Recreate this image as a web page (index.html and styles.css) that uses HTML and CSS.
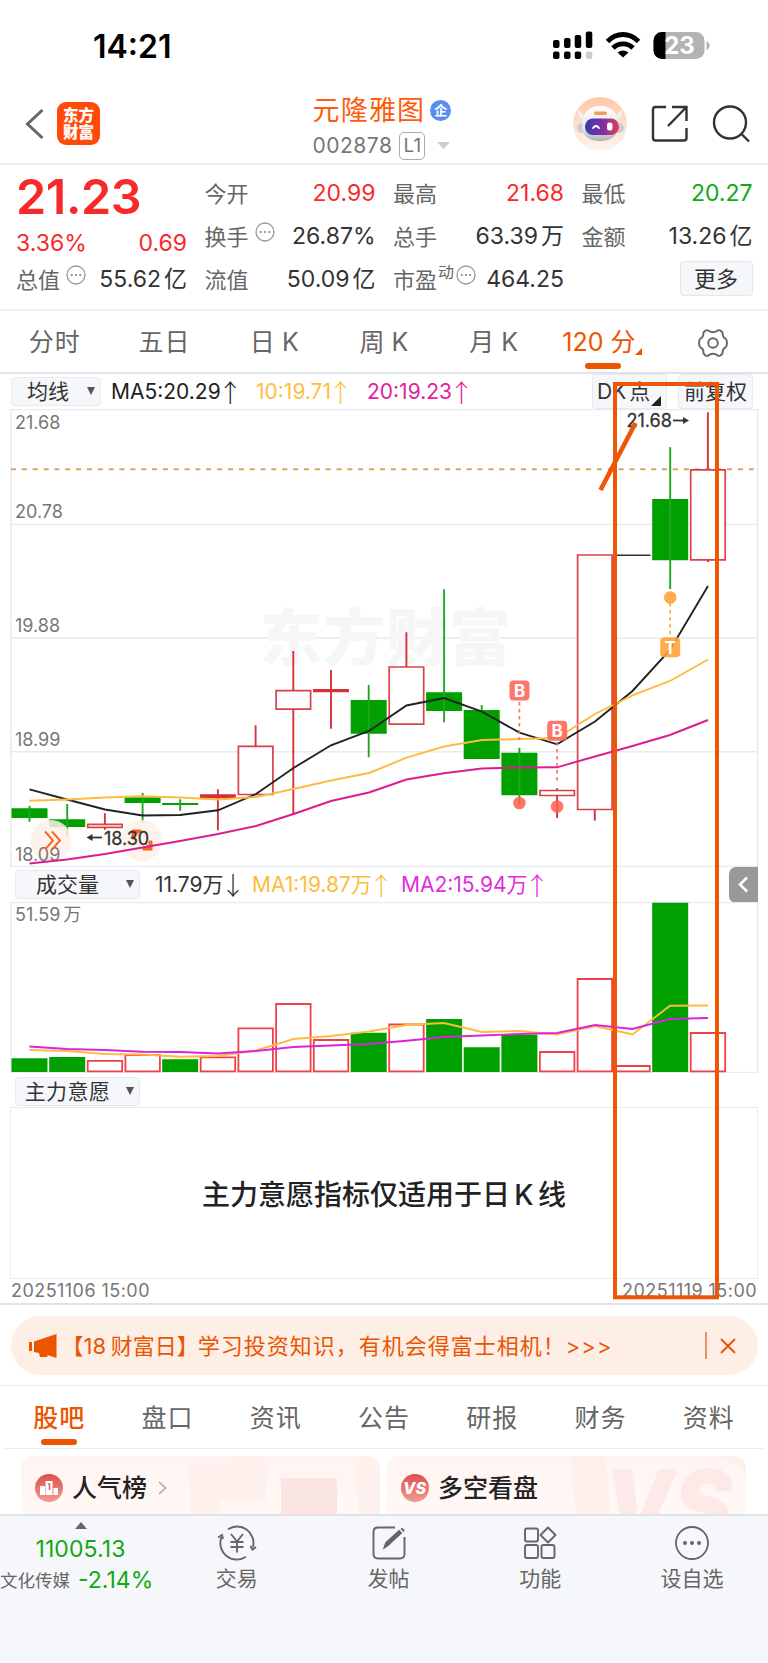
FILE: index.html
```html
<!DOCTYPE html>
<html lang="zh-CN">
<head>
<meta charset="utf-8">
<title>元隆雅图 002878</title>
<link rel="stylesheet" href="styles.css">
</head>
<body>
<div class="screen">
  <div class="status">
    <span class="clock">14:21</span>
    <svg class="status-icons" width="160" height="32" viewBox="0 0 160 32">
      <g fill="#000"><rect x="0" y="10" width="6.500" height="8" rx="2"/><rect x="11" y="8" width="6.500" height="10" rx="2"/><rect x="21.700" y="5" width="6.500" height="13" rx="2"/><rect x="32.800" y="1.500" width="6.500" height="16.500" rx="2"/><rect x="0" y="21.500" width="6.500" height="7.500" rx="2"/><rect x="11" y="21.500" width="6.500" height="7.500" rx="2"/><rect x="21.700" y="21.500" width="6.500" height="7.500" rx="2"/></g>
      <rect x="32.800" y="21.500" width="6.500" height="7.500" rx="2" fill="#ccc"/>
      <g fill="none" stroke="#000" stroke-width="4.800"><path d="M54.500 11.500Q61 4.500 70 4.500T85.500 11.500"/><path d="M60 18Q64 13.800 70 13.800T80 18"/></g>
      <path d="M64.500 22.500Q70 18.500 75.500 22.500L70 27.500z"/>
      <rect x="100.500" y="2" width="51" height="27" rx="8.500" fill="#b3b3b3"/>
      <path d="M112.500 2h-3.500a8.500 8.500 0 0 0-8.500 8.500v10a8.500 8.500 0 0 0 8.500 8.500h3.500z"/>
      <path d="M153.500 11q3 1.500 3 4.500t-3 4.500z" fill="#b3b3b3"/>
      <text class="battery" x="126.500" y="24" text-anchor="middle">23</text>
    </svg>
  </div>

  <header class="header">
    <div class="header-left">
      <svg width="20" height="32" viewBox="0 0 20 32"><path d="M17.500 2L2.500 16l15 14" fill="none" stroke="#666" stroke-width="3"/></svg>
      <div class="logo"><span>东方</span><span>财富</span></div>
    </div>
    <div class="title">
      <div class="name">元隆雅图<i class="corp">企</i></div>
      <div class="code">002878<i class="level">L1</i><svg width="13" height="7" viewBox="0 0 13 7"><path d="M0 0h13L6.500 7z" fill="#ccc"/></svg></div>
    </div>
    <div class="header-right">
      <svg class="robot" width="54" height="54" viewBox="0 0 54 54">
        <defs>
          <linearGradient id="halo" x1="0" y1="0" x2="0" y2="1"><stop offset="0" stop-color="#ffc7a8"/><stop offset="1" stop-color="#fff6f1"/></linearGradient>
          <linearGradient id="visor"><stop offset="0" stop-color="#3a3aa8"/><stop offset=".5" stop-color="#7a2fa8"/><stop offset="1" stop-color="#e0405c"/></linearGradient>
          <linearGradient id="head" x1="0" y1="0" x2="0" y2="1"><stop offset="0" stop-color="#fff"/><stop offset=".65" stop-color="#e8e5e8"/><stop offset="1" stop-color="#aeb0b8"/></linearGradient>
        </defs>
        <circle cx="27" cy="27" r="27" fill="url(#halo)"/>
        <path d="M10 18L5 12q-1 8 5 11zM44 18l5-6q1 8-5 11z" fill="#f3f0f2"/>
        <circle cx="9" cy="31" r="5" fill="#cfcbd0"/><circle cx="46" cy="31" r="5" fill="#cfcbd0"/>
        <path d="M27 9c11 0 18 7 19 17 0 12-7 18-19 18S8 38 9 26C10 16 16 9 27 9z" fill="url(#head)"/>
        <rect x="21" y="14.500" width="13" height="3.500" rx="1.700" fill="#f39b5e"/>
        <rect x="12" y="21.500" width="34" height="16.500" rx="8" fill="url(#visor)"/>
        <path d="M20 31q3-4 6 0" fill="none" stroke="#fff" stroke-width="1.800" stroke-linecap="round"/>
        <rect x="34" y="25.500" width="5.500" height="8" rx="2.500" fill="#fff"/>
      </svg>
      <svg width="38" height="38" viewBox="0 0 38 38" fill="none" stroke="#333" stroke-width="2.400"><path d="M15 2H4.500Q2 2 2 4.500V33q0 2.500 2.500 2.500H33q2.500 0 2.500-2.500V23M35.500 16V2H21M35 2.500L17 21"/></svg>
      <svg width="38" height="38" viewBox="0 0 38 38" fill="none" stroke="#333" stroke-width="2.400"><circle cx="18" cy="17.500" r="16"/><path d="M29 28.500l8 8"/></svg>
    </div>
  </header>

  <section class="quote">
    <div class="qcol">
      <div class="price">21.23</div>
      <div class="cell change"><b class="up">3.36%</b><b class="up">0.69</b></div>
      <div class="cell"><span>总值<svg class="info" viewBox="0 0 20 20"><use href="#dots"/></svg></span><b>55.62 亿</b></div>
    </div>
    <div class="qcol">
      <div class="cell"><span>今开</span><b class="up">20.99</b></div>
      <div class="cell"><span>换手<svg class="info" viewBox="0 0 20 20"><use href="#dots"/></svg></span><b>26.87%</b></div>
      <div class="cell"><span>流值</span><b>50.09 亿</b></div>
    </div>
    <div class="qcol">
      <div class="cell"><span>最高</span><b class="up">21.68</b></div>
      <div class="cell"><span>总手</span><b>63.39 万</b></div>
      <div class="cell"><span>市盈<sup>动</sup><svg class="info tight" viewBox="0 0 20 20"><use href="#dots"/></svg></span><b>464.25</b></div>
    </div>
    <div class="qcol">
      <div class="cell"><span>最低</span><b class="down">20.27</b></div>
      <div class="cell"><span>金额</span><b>13.26 亿</b></div>
      <div class="cell end"><button class="more">更多</button></div>
    </div>
    <svg class="defs" width="0" height="0"><symbol id="dots" viewBox="0 0 20 20"><circle cx="10" cy="10" r="9" fill="none" stroke="#999" stroke-width="1.300"/><g fill="#888"><circle cx="5.800" cy="10" r="1.100"/><circle cx="10" cy="10" r="1.100"/><circle cx="14.200" cy="10" r="1.100"/></g></symbol></svg>
  </section>

  <nav class="periods">
    <span class="cn">分时</span><span class="cn">五日</span><span>日 K</span><span>周 K</span><span>月 K</span>
    <span class="active">120 分<svg class="corner" width="7" height="7" viewBox="0 0 7 7"><path d="M7 0v7H0z" fill="#ec5500"/></svg></span>
    <span><svg width="30" height="28" viewBox="-15 -14 30 28" fill="none" stroke="#666" stroke-width="1.900" stroke-linejoin="round"><path d="M-7.500-12.500Q-5.500-13.500-4-12Q0-9.500 4-12Q5.500-13.500 7.500-12.500L9.500-10.500Q9.500-5.500 12.500-4.500Q14-3.500 14 0Q14 3.500 12.500 4.500Q9.500 5.500 9.500 10.500L7.500 12.500Q5.500 13.500 4 12Q0 9.500-4 12Q-5.500 13.500-7.500 12.500L-9.500 10.500Q-9.500 5.500-12.500 4.500Q-14 3.500-14 0Q-14-3.500-12.500-4.500Q-9.500-5.500-9.500-10.500Z"/><circle r="4.800"/></svg></span>
  </nav>

  <div class="legend ma">
    <div class="select short">均线<i></i></div>
    <span class="l1">MA5:20.29<em>↑</em></span><span class="l2">10:19.71<em>↑</em></span><span class="l3">20:19.23<em>↑</em></span>
    <div class="chips"><div class="chip">DK 点<svg width="10" height="10" viewBox="0 0 10 10"><path d="M10 0v10H0z" fill="#222"/></svg></div><div class="chip fq">前复权</div></div>
  </div>

  <svg class="panel" width="768" height="458" viewBox="0 409 768 458">
    <path class="grid" d="M11 409.500H757.500V867M11 409.500V867M11 524.500H757.500M11 638H757.500M11 751.700H757.500M11 866.500H757.500"/>
    <text class="watermark" x="260" y="661" textLength="251">东方财富</text>
    <g class="axis"><text x="15" y="428.500">21.68</text><text x="15" y="517.500">20.78</text><text x="15" y="632">19.88</text><text x="15" y="746">18.99</text></g>
    <path d="M11 469.300H757" stroke="#dba265" stroke-width="1.900" stroke-dasharray="5 5.850"/>
    <path class="green" d="M11.500 808.300h36v9.700h-36zM49.200 819.300h36v7.700h-36zM124.600 797.300h36v5.700h-36zM162.200 803h36v2h-36zM350.700 700h36v33.700h-36zM426.100 692.300h36v18.700h-36zM463.700 710h36v49h-36zM501.400 752.700h36v42.600h-36zM652.200 499h36v61.300h-36z"/>
    <path class="gwick" d="M29.500 805.700V821.700M67.200 804V837M142.600 793V822.700M180.200 799.300V810.700M368.700 685V757.300M444.100 589.300V722.300M481.700 705V711M519.400 747.700V804M670.200 447.300V589"/>
    <path class="red" d="M199.900 794.300h36v4h-36zM313 689h36v3.300h-36z"/>
    <path class="rbox" d="M87.700 824.300h34.500v3h-34.500zM238.400 746.300h34.500v48.200h-34.500zM276.100 690.700h34.500v18.500h-34.500zM389.200 667h34.500v57.200h-34.500zM539.900 790.500h34.500v5h-34.500zM577.600 555h34.500v254.500h-34.500zM690.700 469.800h34.500v90h-34.500z"/>
    <path class="rwick" d="M104.900 813.300V824M104.900 827.500V829.700M217.900 789.300V830.300M255.600 725.300V746M293.300 651V690.500M293.300 709.500V815M331 670V728.700M406.400 632.300V667M557.100 788.300V790.500M557.100 795.500V818M594.800 809.700V820.700M707.900 412.300V469.500M707.900 560V562"/>
    <path d="M614.500 555.300h36" stroke="#333" stroke-width="1.600"/>
    <g fill="#fff0e9"><circle cx="51" cy="840.500" r="20.500" opacity=".85"/><circle cx="142" cy="840.500" r="20.500" opacity=".85"/></g>
    <text class="axis" x="15" y="860.500">18.09</text>
    <g fill="none" stroke="#f2681f" stroke-width="1.900"><path d="M45 831.500l8 9-8 9M52 831.500l8 9-8 9"/></g>
    <path d="M132 830h9v3h-6v6h-3zM152 850h-9v-3h6v-6h3zM134 831l6 6M151 849l-6-6" fill="#f2681f" stroke="#f2681f"/>
    <g class="call"><text x="104" y="845">18.30</text><path d="M89 837.500h13"/><path class="tip" d="M86.500 837.500l6-3.500v7z"/><text x="626.500" y="427">21.68</text><path d="M673 420.500h13"/><path class="tip" d="M689 420.500l-6-3.500v7z"/></g>
    <polyline class="c1" points="29.500,789.300 67,799.500 105,809.500 142.500,815.500 180,815 218,810.300 256,794 293.500,768 331,745.300 369,731 406.500,705.500 444,698 482,711.700 519.500,732.700 557,744.300 595,721.500 632.500,691 670,650 708,586"/>
    <polyline class="c2" points="29.500,800.700 67,799.500 105,797.500 142.500,796.300 180,797.500 218,799.500 256,797 293.500,789 331,780.500 369,773 406.500,757.700 444,746.500 482,740 519.500,739 557,738 595,714 632.500,695.300 670,681 708,659.500"/>
    <polyline class="c3" points="29.500,863.500 67,859.500 105,854 142.500,847.500 180,841 218,834 256,826 293.500,814 331,801 369,792.500 406.500,779.500 444,773.300 482,768.500 519.500,767.500 557,767.300 595,756.500 632.500,746 670,735 708,720"/>
    <g stroke="#fb7468" stroke-width="1.700" stroke-dasharray="3.500 3.500"><path d="M519.400 702v38"/><path d="M557.100 742v39"/></g>
    <g fill="#ff6052" opacity=".85"><circle cx="519.400" cy="803" r="6.300"/><circle cx="557.100" cy="806.500" r="6.300"/><rect x="509.500" y="680.500" width="20" height="20" rx="4"/><rect x="547.200" y="720.700" width="20" height="20" rx="4"/></g>
    <path d="M670.200 603v33" stroke="#ffa63c" stroke-width="1.700" stroke-dasharray="3.500 3.500"/>
    <g fill="#ffa43a" opacity=".9"><circle cx="670.200" cy="597.500" r="6.300"/><rect x="660.200" y="637.300" width="20" height="20" rx="4"/></g>
    <g class="mark"><text x="519.500" y="697">B</text><text x="557.200" y="737.200">B</text><text x="670.200" y="653.500">T</text></g>
  </svg>

  <div class="legend vol">
    <div class="select three">成交量<i></i></div>
    <span class="v0">11.79万<em>↓</em></span><span class="v1">MA1:19.87万<em>↑</em></span><span class="v2">MA2:15.94万<em>↑</em></span>
    <div class="drawer"><svg width="11" height="17" viewBox="0 0 11 17"><path d="M9 1.500L2 8.500l7 7" fill="none" stroke="#fff" stroke-width="2.600"/></svg></div>
  </div>

  <svg class="panel" width="768" height="171" viewBox="0 902 768 171">
    <path class="grid" d="M11 902.500H757.500V1072.500H11z"/>
    <text class="axis" x="15" y="920.500">51.59 万</text>
    <path class="green" d="M11.500 1072v-13.700h36v13.700zM49.200 1072v-15h36v15zM162.200 1072v-12.700h36v12.700zM350.700 1072v-39.300h36v39.300zM426.100 1072v-53h36v53zM463.700 1072v-24.700h36v24.700zM501.400 1072v-37.300h36v37.300zM652.200 1072v-169.300h36v169.300z"/>
    <path class="vbox" d="M87.700 1071.300v-10.500h34.500v10.500zM125.400 1071.300v-16.300h34.500v16.300zM200.700 1071.300v-14h34.500v14zM238.400 1071.300v-43h34.500v43zM276.100 1071.300v-67.300h34.500v67.300zM313.800 1071.300v-31.300h34.500v31.300zM389.200 1071.300v-46.800h34.500v46.800zM539.900 1071.300v-19.300h34.500v19.300zM577.600 1071.300v-92.300h34.500v92.300zM615.300 1071.300v-5.300h34.500v5.300zM690.700 1071.300v-38.300h34.500v38.300z"/>
    <polyline class="c2" points="29.500,1050 67,1051 105,1054 142.500,1054.500 180,1056.700 218,1056 256,1050.500 293.500,1039 331,1036 369,1031.500 406.500,1025 444,1023 482,1032 519.500,1031 557,1034.500 595,1026 632.500,1034.500 670,1005.700 708,1005.500"/>
    <polyline class="c4" points="29.500,1046.500 67,1049 105,1050 142.500,1051.700 180,1052 218,1053.500 256,1051 293.500,1047 331,1045.500 369,1044 406.500,1040.700 444,1037 482,1035.500 519.500,1034 557,1033 595,1025 632.500,1029 670,1019 708,1018"/>
  </svg>

  <div class="legend will"><div class="select four">主力意愿<i></i></div></div>
  <div class="notice">主力意愿指标仅适用于日 K 线</div>
  <div class="dates"><span>20251106 15:00</span><span>20251119 15:00</span></div>

  <div class="banner-row">
    <div class="banner">
      <svg width="28" height="24" viewBox="0 0 28 24"><path d="M0 8h3v9H0zM5 7.500L27.500 0v24l-9-3v2H11l-1-4-5-1z" fill="#ec5500"/></svg>
      <span class="b1">【18 财富日】</span><span class="b2">学习投资知识，有机会得富士相机！</span><span class="b3">&gt;&gt;&gt;</span>
      <i class="rule"></i>
      <svg width="16" height="16" viewBox="0 0 16 16"><path d="M1 1l14 14M15 1L1 15" stroke="#ec5500" stroke-width="1.900"/></svg>
    </div>
  </div>

  <nav class="sections"><span class="active">股吧</span><span>盘口</span><span>资讯</span><span>公告</span><span>研报</span><span>财务</span><span>资料</span></nav>

  <div class="cards">
    <div class="card rank">
      <svg width="28" height="28" viewBox="0 0 28 28"><defs><linearGradient id="badge" x1="0" y1="0" x2="0" y2="1"><stop offset="0" stop-color="#dd4f4d"/><stop offset="1" stop-color="#f09b93"/></linearGradient></defs><circle cx="14" cy="14" r="14" fill="url(#badge)"/><path d="M5 12h5v9H5zM10.500 7h7v14h-7zM18.500 14H23v7h-4.500z" fill="#fff"/><path d="M13 10h1.500v6" fill="none" stroke="#dd6060" stroke-width="1.500"/></svg>
      <span>人气榜</span>
      <svg class="chev" width="9" height="14" viewBox="0 0 9 14"><path d="M1 1l6.500 6L1 13" fill="none" stroke="#aaa" stroke-width="1.600"/></svg>
      <svg class="deco" width="190" height="58" viewBox="0 0 190 58"><path d="M0 5h36V0h40v45H30v13H0z" fill="#fff1ee"/><path d="M91 22h56v36H91z" fill="#fae5e3"/><path d="M163 0h16q11 0 11 12v46h-21z" fill="#fff1ee"/></svg>
    </div>
    <div class="card versus">
      <svg width="28" height="28" viewBox="0 0 28 28"><circle cx="14" cy="14" r="14" fill="url(#badge)"/><text class="vs" x="13.500" y="20" text-anchor="middle">VS</text></svg>
      <span>多空看盘</span>
      <svg class="deco" width="176" height="58" viewBox="0 0 176 58"><path d="M0 0h35l6 58H6zM80 0h60q32 5 36 22V0z" fill="#fff0ee"/><text class="bigvs" x="34" y="84" textLength="128" lengthAdjust="spacingAndGlyphs">VS</text></svg>
    </div>
  </div>

  <footer class="toolbar">
    <div class="index">
      <svg width="12" height="7" viewBox="0 0 12 7"><path d="M6 0l6 7H0z" fill="#666"/></svg>
      <b>11005.13</b>
      <div><span>文化传媒</span><b>-2.14%</b></div>
    </div>
    <div class="tool"><svg width="40" height="36" viewBox="0 0 40 36" fill="none" stroke="#666" stroke-width="1.900"><path d="M11 4.200A16.500 16.500 0 0 1 36 22M29 31.800A16.500 16.500 0 0 1 4.500 12M1 12.500L5 10l1 4M39 22l-3.500 2.500-2-3.500"/><path d="M14 9l6 7.500L26 9M20 16.500V27.500M13.500 17h13M13.500 22h13"/></svg><span>交易</span></div>
    <div class="tool"><svg width="36" height="36" viewBox="0 0 36 36" fill="none" stroke="#666" stroke-width="1.900"><path d="M24 2.500H7Q2.500 2.500 2.500 7v22q0 4.500 4.500 4.500h22q4.500 0 4.500-4.500V12"/><path d="M13.500 22.500L15 18 28 6l2 2L16.500 20.500z" fill="#666"/><path d="M31 5.500l1.500-1.500" stroke-width="4"/></svg><span>发帖</span></div>
    <div class="tool"><svg width="36" height="36" viewBox="0 0 36 36" fill="none" stroke="#666" stroke-width="1.900"><rect x="3" y="3.500" width="13" height="13" rx="2"/><rect x="3" y="20" width="13" height="13" rx="2"/><rect x="19.500" y="20" width="13" height="13" rx="2"/><path d="M26 2.500l7.500 7.500-7.500 7.500-7.500-7.500z" stroke-linejoin="round"/></svg><span>功能</span></div>
    <div class="tool"><svg width="36" height="36" viewBox="0 0 36 36"><circle cx="18" cy="18" r="16" fill="none" stroke="#666" stroke-width="1.800"/><g fill="#666"><circle cx="11" cy="18" r="2"/><circle cx="18" cy="18" r="2"/><circle cx="25" cy="18" r="2"/></g></svg><span>设自选</span></div>
  </footer>

  <svg class="drawing" width="768" height="1663" viewBox="0 0 768 1663" fill="none" stroke="#ee5604"><rect x="615" y="384" width="102" height="913.300" stroke-width="4"/><path d="M600.500 490L635.500 423" stroke-width="4.600"/></svg>
</div>
</body>
</html>
```
FILE: styles.css
```css
* { box-sizing: border-box; }
body { margin: 0; background: #fff; }
i, em { font-style: normal; }
svg { display: block; flex: none; }
.screen {
  position: relative; width: 768px; height: 1663px; overflow: hidden;
  font-family: Inter, "Noto Sans CJK SC", sans-serif; color: #333; line-height: 1; white-space: nowrap;
}
.status { height: 84px; display: flex; justify-content: space-between; padding: 30px 55px 0 93px; }
.clock { font-size: 32px; font-weight: 600; color: #000; line-height: 33px; }
.battery { font-size: 24px; font-weight: 700; fill: #fff; }

.header { height: 81px; border-bottom: 2px solid #ececee; display: grid; grid-template-columns: 1fr auto 1fr; align-items: center; padding: 0 18px 0 25px; }
.header-left, .header-right { display: flex; align-items: center; }
.header-left { gap: 12px; }
.logo { width: 43px; height: 43px; border-radius: 9px; background: #ff4a0a; color: #fff; display: flex; flex-direction: column; align-items: center; justify-content: center; font-size: 15.500px; font-weight: 900; line-height: 17px; }
.title { width: 150px; display: flex; flex-direction: column; gap: 4px; padding-top: 6px; }
.name { color: #ff5a0c; font-size: 27px; line-height: 34px; letter-spacing: 1.200px; display: flex; align-items: center; gap: 5px; }
.corp { width: 21px; height: 21px; border-radius: 50%; background: #5c8cf0; color: #fff; font-size: 13px; font-weight: 700; letter-spacing: 0; line-height: 20px; text-align: center; }
.code { display: flex; align-items: center; font-size: 21px; letter-spacing: .5px; color: #777; height: 28px; }
.level { width: 26px; height: 28px; border: 1.500px solid #aaa; border-radius: 5px; margin: 0 12px 0 7px; font-size: 19px; line-height: 26px; letter-spacing: 0; text-align: center; }
.header-right { justify-content: flex-end; gap: 23px; }
.header-right .robot { margin-right: 1px; }

.quote { height: 146px; padding: 7px 16px 0 16px; border-bottom: 2px solid #f0f0f2; display: grid; grid-template-columns: repeat(4, 171px); column-gap: 17.500px; }
.defs { position: absolute; }
.cell { height: 43px; display: flex; justify-content: space-between; align-items: center; font-size: 22px; }
.cell span { color: #666; display: flex; align-items: center; }
.cell b { font-weight: 400; font-size: 23px; word-spacing: -3.500px; }
.cell sup { font-size: 16px; align-self: flex-start; margin: -5px 0 0 1px; line-height: 16px; }
.info { width: 20px; height: 20px; margin: -9px 0 0 6px; }
.info.tight { margin-left: 2px; }
.cell .up, .price { color: #f72a2a; }
.cell .down { color: #12a812; }
.price { height: 50px; font-size: 48.500px; font-weight: 600; line-height: 50px; letter-spacing: -.4px; }
.cell.change { height: 36px; padding-top: 7px; }
.cell.end { justify-content: flex-end; }
.more { width: 73px; height: 35px; padding: 0; margin-top: -2px; border: 1.500px solid #e6e7ec; border-radius: 4px; background: #f6f7fa; color: #333; font: 22px/30px Inter, "Noto Sans CJK SC", sans-serif; }

.periods { height: 63px; border-bottom: 2px solid #e2e3e8; display: grid; grid-template-columns: repeat(7, 1fr); }
.periods span, .sections span { position: relative; display: flex; justify-content: center; align-items: center; padding-top: 2px; font-size: 25px; color: #666; }
.periods .cn, .sections span { letter-spacing: 1px; }
.periods .active { color: #ec5500; padding-right: 3px; }
.sections .active { color: #ec5500; font-weight: 500; }
.active::after { content: ""; position: absolute; bottom: 3px; left: 50%; width: 36px; height: 6px; margin-left: -18px; border-radius: 3px; background: #ec5500; }
.corner { margin: 18px 0 0 -1px; }

.legend { display: flex; align-items: center; font-size: 21px; }
.legend em { display: inline-block; font-family: "Noto Sans CJK SC", sans-serif; font-size: 25px; font-weight: 300; line-height: 21px; width: 14px; text-indent: -5px; margin-left: 2px; }
.ma { height: 35px; padding: 0 15px 0 11px; }
.select { width: 125px; height: 29px; padding-right: 20px; border: 1.500px solid #e8e9ee; border-radius: 4px; background: #f6f7fa; display: flex; align-items: center; justify-content: center; position: relative; }
.select i { position: absolute; right: 5px; top: 9px; border: 4px solid transparent; border-top: 8px solid #555; border-bottom: 0; }
.select.short { width: 90px; padding-right: 16px; }
.select.four { letter-spacing: .4px; }
.l1, .l2, .l3, .v0, .v1, .v2 { display: flex; align-items: center; }
.l1 { width: 145px; margin-left: 10px; color: #222; }
.l2 { width: 111px; color: #ffbe45; }
.l3 { color: #e6219b; }
.chips { display: flex; gap: 11px; margin-left: auto; }
.chip { width: 75px; height: 35px; padding-left: 4px; border: 1.500px solid #e8e9ee; border-radius: 4px; background: #f6f7fa; display: flex; align-items: center; gap: 1px; word-spacing: -3px; }
.chip svg { margin-top: 18px; }
.chip.fq { padding-left: 5px; }

.grid { fill: none; stroke: #e9eaf2; stroke-width: 1.500; }
.watermark { font-size: 62px; font-weight: 900; fill: #f6f6f7; }
.axis { font-size: 18px; fill: #777; word-spacing: -2px; }
.green { fill: #00a000; }
.gwick { stroke: #1fa81f; stroke-width: 1.900; }
.red { fill: #d53037; }
.rwick { stroke: #d5343c; stroke-width: 1.900; }
.rbox { fill: #fff; stroke: #d8434a; stroke-width: 1.700; }
.vbox { fill: #fff; stroke: #ee4248; stroke-width: 1.800; }
.c1, .c2, .c3, .c4 { fill: none; stroke-width: 1.900; }
.c1 { stroke: #222; }
.c2 { stroke: #fdbb41; }
.c3 { stroke: #dc1c90; }
.c4 { stroke: #dc23dc; }
.call { font-size: 18px; fill: #333; stroke: #333; stroke-width: .3; }
.call path { stroke-width: 1.800; }
.call .tip { stroke: none; }
.mark { font-size: 17px; font-weight: 700; fill: #fff; text-anchor: middle; }

.vol { height: 35px; padding-left: 15px; }
.v0 { width: 97px; margin-left: 15px; }
.v1 { width: 149px; color: #fdbb41; }
.v2 { color: #e02de0; }
.drawer { width: 29px; height: 36px; margin: 0 10px 0 auto; border-radius: 7px 0 0 7px; background: #999; display: flex; align-items: center; justify-content: center; }
.will { height: 34px; padding: 2px 0 0 15px; }
.notice { height: 172px; margin: 0 10px 0 10px; padding-top: 3px; border: 1.500px solid #e9eaf2; display: flex; align-items: center; justify-content: center; font-size: 28px; font-weight: 500; color: #222; word-spacing: -3px; }
.dates { height: 26px; padding: 0 11px; border-bottom: 2px solid #e2e3e8; display: flex; justify-content: space-between; align-items: center; font-size: 18px; color: #777; letter-spacing: .45px; }

.banner-row { height: 81px; padding: 11px 10.500px; border-bottom: 1.500px solid #ececee; }
.banner { height: 59px; border-radius: 30px; background: #fdeee6; color: #ec5500; display: flex; align-items: center; padding: 0 22px 0 18px; font-size: 22px; }
.b1 { margin-left: 5px; word-spacing: -1.500px; }
.b2 { margin-left: -1px; letter-spacing: 1px; }
.b3 { letter-spacing: 1px; }
.rule { width: 1.500px; height: 27px; margin: 0 13px 0 auto; background: #f09263; }

.sections { height: 63px; margin: 0 5px; border-bottom: 1.500px solid #ececee; display: grid; grid-template-columns: repeat(7, 1fr); }
.cards { height: 65px; padding: 7px 21px 0; display: grid; grid-template-columns: 359px 359px; gap: 7px; }
.card { position: relative; height: 58px; overflow: hidden; padding: 6px 0 0 14px; border-radius: 12px 12px 0 0; background: linear-gradient(#fff4f2, #fff9f6); display: flex; align-items: center; gap: 9px; font-size: 25px; font-weight: 500; color: #222; }
.card > * { position: relative; z-index: 1; }
.card .deco { position: absolute; right: 0; top: 0; z-index: 0; }
.chev { margin-left: 2px; }
.vs { font-size: 16px; font-weight: 800; font-style: italic; fill: #fff; }
.bigvs { font-size: 98px; font-weight: 900; font-style: italic; fill: #fde9e7; }

.toolbar { height: 149px; border-top: 2px solid #e2e3e9; background: #f6f7fa; display: grid; grid-template-columns: 161px repeat(4, 151.700px); }
.index { display: flex; flex-direction: column; align-items: center; padding-top: 6px; color: #12a812; font-size: 23px; }
.index > b { margin-top: 9px; letter-spacing: .1px; }
.index b { font-weight: 400; }
.index div { width: 161px; display: flex; align-items: center; gap: 8px; margin-top: 8px; }
.index span { font-size: 17.500px; color: #666; }
.tool { display: flex; flex-direction: column; align-items: center; padding-top: 9px; gap: 6px; font-size: 21px; color: #666; }
.tool span { line-height: 24px; }
.drawing { position: absolute; left: 0; top: 0; pointer-events: none; }
```
